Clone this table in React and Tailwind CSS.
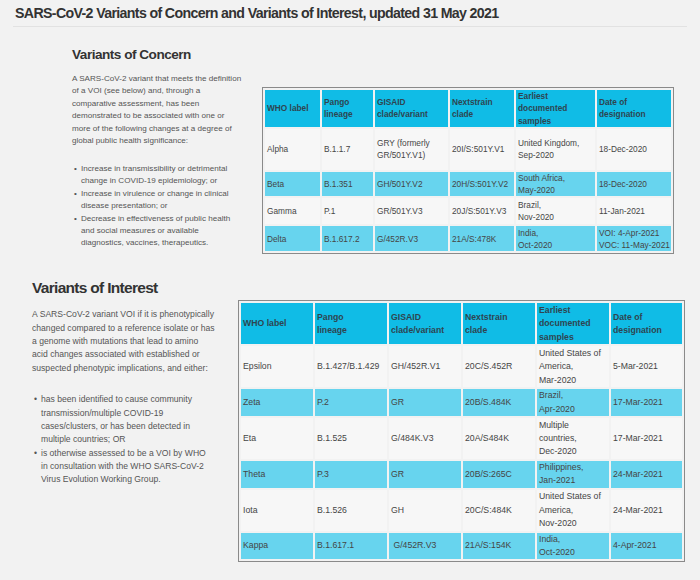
import React from 'react';

const concernCols = [55, 51, 73, 64, 79, 74];
const interestCols = [72, 72, 72, 72, 72, 71];

const headers = [
  ['WHO label'],
  ['Pango', 'lineage'],
  ['GISAID', 'clade/variant'],
  ['Nextstrain', 'clade'],
  ['Earliest', 'documented', 'samples'],
  ['Date of', 'designation'],
];

const concernRows = [
  { h: 'h-[41px]', hl: false, cells: [['Alpha'], ['B.1.1.7'], ['GRY (formerly', 'GR/501Y.V1)'], ['20I/S:501Y.V1'], ['United Kingdom,', 'Sep-2020'], ['18-Dec-2020']] },
  { h: 'h-[24px]', hl: true, cells: [['Beta'], ['B.1.351'], ['GH/501Y.V2'], ['20H/S:501Y.V2'], ['South Africa,', 'May-2020'], ['18-Dec-2020']] },
  { h: 'h-[26px]', hl: false, cells: [['Gamma'], ['P.1'], ['GR/501Y.V3'], ['20J/S:501Y.V3'], ['Brazil,', 'Nov-2020'], ['11-Jan-2021']] },
  { h: 'h-[25px]', hl: true, cells: [['Delta'], ['B.1.617.2'], ['G/452R.V3'], ['21A/S:478K'], ['India,', 'Oct-2020'], ['VOI: 4-Apr-2021', 'VOC: 11-May-2021']] },
];

const interestRows = [
  { h: 'h-[41px]', hl: false, cells: [['Epsilon'], ['B.1.427/B.1.429'], ['GH/452R.V1'], ['20C/S.452R'], ['United States of', 'America,', 'Mar-2020'], ['5-Mar-2021']] },
  { h: 'h-[26px]', hl: true, cells: [['Zeta'], ['P.2'], ['GR'], ['20B/S.484K'], ['Brazil,', 'Apr-2020'], ['17-Mar-2021']] },
  { h: 'h-[41px]', hl: false, cells: [['Eta'], ['B.1.525'], ['G/484K.V3'], ['20A/S484K'], ['Multiple', 'countries,', 'Dec-2020'], ['17-Mar-2021']] },
  { h: 'h-[26px]', hl: true, cells: [['Theta'], ['P.3'], ['GR'], ['20B/S:265C'], ['Philippines,', 'Jan-2021'], ['24-Mar-2021']] },
  { h: 'h-[41px]', hl: false, cells: [['Iota'], ['B.1.526'], ['GH'], ['20C/S:484K'], ['United States of', 'America,', 'Nov-2020'], ['24-Mar-2021']] },
  { h: 'h-[25px]', hl: true, cells: [['Kappa'], ['B.1.617.1'], ['\u00a0G/452R.V3'], ['21A/S:154K'], ['India,', 'Oct-2020'], ['4-Apr-2021']] },
];

const Lines = ({ lines }) =>
  lines.map((l, i) => (
    <React.Fragment key={i}>
      {i > 0 && <br />}
      {l}
    </React.Fragment>
  ));

const VariantTable = ({ cols, rows, width, headH, text }) => (
  <table className={`table-fixed border-separate border-spacing-[2px] border border-[#8a8a8a] ${width} ${text}`}>
    <colgroup>
      {cols.map((w, i) => (
        <col key={i} style={{ width: w }} />
      ))}
    </colgroup>
    <thead>
      <tr className={headH}>
        {headers.map((h, i) => (
          <th key={i} className="bg-[#10bce6] pl-[2px] text-left align-middle font-bold text-[#2e4550]">
            <Lines lines={h} />
          </th>
        ))}
      </tr>
    </thead>
    <tbody>
      {rows.map((r, ri) => (
        <tr key={ri} className={r.h}>
          {r.cells.map((c, ci) => (
            <td
              key={ci}
              className={`pl-[2px] align-middle whitespace-nowrap text-[#454545] ${r.hl ? 'bg-[#67d4ee]' : 'bg-[#f7f7f7]'}`}
            >
              <Lines lines={c} />
            </td>
          ))}
        </tr>
      ))}
    </tbody>
  </table>
);

const Bullets = ({ items, className }) => (
  <ul className={className}>
    {items.map((lines, i) => (
      <li key={i} className="flex">
        <span className="w-[9px] shrink-0 pl-[2px]">•</span>
        <span className="whitespace-nowrap">
          <Lines lines={lines} />
        </span>
      </li>
    ))}
  </ul>
);

export default function App() {
  return (
    <div className="min-h-[580px] w-[700px] bg-[#f2f2f2] font-['Liberation_Sans',Arial,sans-serif] text-[#555]">
      {/* Title */}
      <div className="mx-[13px] border-b border-[#e2e2e2] pt-[4px] pb-[4px]">
        <h1 className="pl-[2px] text-[14.2px] leading-[18px] font-bold tracking-[-0.65px] text-[#333]">
          SARS-CoV-2 Variants of Concern and Variants of Interest, updated 31 May 2021
        </h1>
      </div>

      {/* Variants of Concern */}
      <div className="mt-[19px] flex pl-[72px]">
        <div className="w-[190px] shrink-0">
          <h2 className="text-[13.6px] leading-[18px] font-bold tracking-[-0.5px] text-[#333]">Variants of Concern</h2>
          <p className="mt-[9px] whitespace-nowrap text-[8.1px] leading-[12.4px]">
            A SARS-CoV-2 variant that meets the definition
            <br />
            of a VOI (see below) and, through a
            <br />
            comparative assessment, has been
            <br />
            demonstrated to be associated with one or
            <br />
            more of the following changes at a degree of
            <br />
            global public health significance:
          </p>
          <Bullets
            className="mt-[15.6px] text-[8.1px] leading-[12.4px]"
            items={[
              ['Increase in transmissibility or detrimental', 'change in COVID-19 epidemiology; or'],
              ['Increase in virulence or change in clinical', 'disease presentation; or'],
              ['Decrease in effectiveness of public health', 'and social measures or available', 'diagnostics, vaccines, therapeutics.'],
            ]}
          />
        </div>
        <div className="mt-[41px]">
          <VariantTable
            cols={concernCols}
            rows={concernRows}
            width="w-[412px]"
            headH="h-[36px]"
            text="text-[8.3px] leading-[12.3px]"
          />
        </div>
      </div>

      {/* Variants of Interest */}
      <div className="mt-[24px] flex pl-[32px]">
        <div className="w-[206px] shrink-0">
          <h2 className="text-[15.5px] leading-[20px] font-bold tracking-[-0.7px] text-[#333]">Variants of Interest</h2>
          <p className="mt-[10px] whitespace-nowrap text-[8.6px] leading-[13.3px]">
            A SARS-CoV-2 variant VOI if it is phenotypically
            <br />
            changed compared to a reference isolate or has
            <br />
            a genome with mutations that lead to amino
            <br />
            acid changes associated with established or
            <br />
            suspected phenotypic implications, and either:
          </p>
          <Bullets
            className="mt-[18.5px] text-[8.6px] leading-[13.3px]"
            items={[
              ['has been identified to cause community', 'transmission/multiple COVID-19', 'cases/clusters, or has been detected in', 'multiple countries; OR'],
              ['is otherwise assessed to be a VOI by WHO', 'in consultation with the WHO SARS-CoV-2', 'Virus Evolution Working Group.'],
            ]}
          />
        </div>
        <div className="mt-[22px]">
          <VariantTable
            cols={interestCols}
            rows={interestRows}
            width="w-[447px]"
            headH="h-[41px]"
            text="text-[8.7px] leading-[13.3px]"
          />
        </div>
      </div>
    </div>
  );
}
